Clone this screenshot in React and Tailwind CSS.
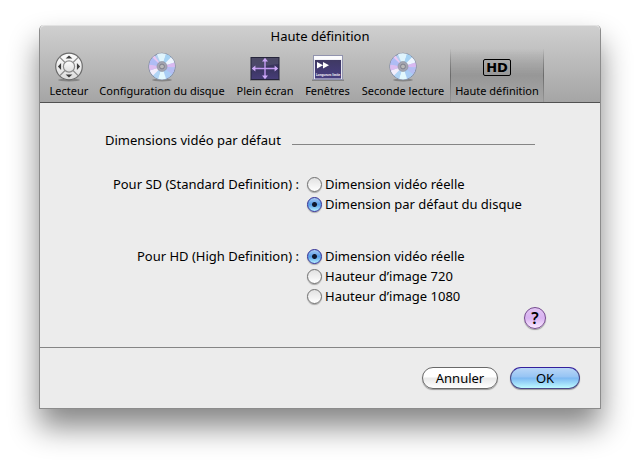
import React, { useState } from "react";

function RemoteIcon() {
  return (
    <svg width="30" height="30" viewBox="0 0 30 30">
      <defs>
        <linearGradient id="remoteFill" x1="0" y1="0" x2="0" y2="1">
          <stop offset="0" stopColor="#fdfdfd" />
          <stop offset="1" stopColor="#dcdcdc" />
        </linearGradient>
      </defs>
      <ellipse cx="15" cy="28" rx="11" ry="1.5" fill="#000" opacity="0.25" />
      <circle cx="15" cy="14.5" r="13.3" fill="url(#remoteFill)" stroke="#6c6c6c" strokeWidth="1.2" />
      <path d="M6 5.5l5 5M24 5.5l-5 5M6 23.5l5-5M24 23.5l-5-5" stroke="#8f8f8f" strokeWidth="1.1" />
      <circle cx="15" cy="14.5" r="5.6" fill="url(#remoteFill)" stroke="#8f8f8f" strokeWidth="1.2" />
      <path
        d="M15 3.4l3.4 3.2h-6.8zM15 25.6l3.4-3.2h-6.8zM3.9 14.5l3.2-3.4v6.8zM26.1 14.5l-3.2-3.4v6.8z"
        fill="#3d3d3d"
      />
    </svg>
  );
}

function DiscIcon() {
  return (
    <svg width="30" height="30" viewBox="0 0 30 30">
      <ellipse cx="15" cy="28" rx="10" ry="1.4" fill="#000" opacity="0.25" />
      <g transform="translate(0 -0.5)">
        <circle cx="15" cy="15" r="13.3" fill="#b3cdf0" stroke="#858b9e" strokeWidth="1" />
        <path d="M15 15L10 2.8A13 13 0 0 1 19 2.6z" fill="#dff4fc" />
        <path d="M15 15L19 2.6A13 13 0 0 1 24 5.8z" fill="#a5d2f3" />
        <path d="M15 15L24 5.8A13 13 0 0 1 27.4 11z" fill="#eef6ff" />
        <path d="M15 15L27.4 11A13 13 0 0 1 27.9 16z" fill="#d9b9f0" />
        <path d="M15 15L27.9 16A13 13 0 0 1 25 23z" fill="#b4bdf2" />
        <path d="M15 15L25 23A13 13 0 0 1 19 27.3z" fill="#a9cdf5" />
        <path d="M15 15L19 27.3A13 13 0 0 1 11 27.3z" fill="#e3f8fd" />
        <path d="M15 15L11 27.3A13 13 0 0 1 6 24z" fill="#b1d5f5" />
        <path d="M15 15L6 24A13 13 0 0 1 2.8 19z" fill="#f3eefc" />
        <path d="M15 15L2.8 19A13 13 0 0 1 2.2 13z" fill="#dcbdf0" />
        <path d="M15 15L2.2 13A13 13 0 0 1 5.5 6z" fill="#afbcf5" />
        <path d="M15 15L5.5 6A13 13 0 0 1 7.6 4.3z" fill="#eac8f2" />
        <circle cx="15" cy="15" r="5" fill="#a3a4b0" stroke="#8b8e9c" strokeWidth="0.6" />
        <circle cx="15" cy="15" r="2.4" fill="#b9b9b9" stroke="#727482" strokeWidth="0.8" />
      </g>
    </svg>
  );
}

function FullScreenIcon() {
  return (
    <svg width="30" height="30" viewBox="0 0 30 30">
      <defs>
        <linearGradient id="screenFill" x1="0" y1="0" x2="0" y2="1">
          <stop offset="0" stopColor="#3b3955" />
          <stop offset="0.5" stopColor="#3a3560" />
          <stop offset="1" stopColor="#473d78" />
        </linearGradient>
      </defs>
      <rect x="0" y="27.5" width="30" height="1.5" fill="#000" opacity="0.2" />
      <rect x="1" y="5.5" width="28" height="22" fill="url(#screenFill)" stroke="#25243a" />
      <path d="M1.5 6h27v6Q14 13 1.5 19z" fill="#fff" opacity="0.09" />
      <path d="M3 16.5h24M15 7.5v18" stroke="#c39af2" strokeWidth="1.4" />
      <path
        d="M15 5.8l3 3.6h-6zM15 27.2l3-3.6h-6zM1.8 16.5l3.6-3v6zM28.2 16.5l-3.6-3v6z"
        fill="#cda9f8"
      />
    </svg>
  );
}

function WindowsIcon() {
  return (
    <svg width="32" height="30" viewBox="0 0 32 30">
      <defs>
        <linearGradient id="osdFill" x1="0" y1="0" x2="0" y2="1">
          <stop offset="0" stopColor="#3f3963" />
          <stop offset="1" stopColor="#463d80" />
        </linearGradient>
      </defs>
      <rect x="0" y="27.5" width="32" height="1.5" fill="#000" opacity="0.25" />
      <rect x="1.5" y="3.5" width="29" height="24" fill="#e5e5ef" stroke="#9193ae" />
      <rect x="2" y="4" width="28" height="3.5" fill="#fbfbfd" />
      <rect x="3" y="8" width="26" height="18.5" fill="url(#osdFill)" />
      <path d="M5 10l6 3.2-6 3.3zM11 10l6 3.2-6 3.3z" fill="#fff" />
      <text x="4" y="24" fill="#fff" fontSize="3" fontWeight="700" fontFamily="Liberation Sans, sans-serif">
        Longueurs limite
      </text>
    </svg>
  );
}

function HDIcon() {
  return (
    <span className="flex h-[17px] w-7 items-center justify-center rounded-xs border border-black font-['DejaVu_Sans',sans-serif] text-[13px] font-bold leading-none">
      HD
    </span>
  );
}

const tabs = [
  { name: "Lecteur", icon: <RemoteIcon />, width: "w-12" },
  { name: "Configuration du disque", icon: <DiscIcon />, width: "w-[138px]" },
  { name: "Plein écran", icon: <FullScreenIcon />, width: "w-[68px]" },
  { name: "Fenêtres", icon: <WindowsIcon />, width: "w-[57px]" },
  { name: "Seconde lecture", icon: <DiscIcon />, width: "w-[94px]" },
  { name: "Haute définition", icon: <HDIcon />, width: "w-[94px]" },
];

const groups = [
  {
    id: "sd",
    label: "Pour SD (Standard Definition) :",
    options: ["Dimension vidéo réelle", "Dimension par défaut du disque"],
  },
  {
    id: "hd",
    label: "Pour HD (High Definition) :",
    options: ["Dimension vidéo réelle", "Hauteur d’image 720", "Hauteur d’image 1080"],
  },
];

function Radio({ name, label, checked, onChange }) {
  return (
    <label className="flex h-5 items-center gap-[3px]">
      <input
        type="radio"
        name={name}
        checked={checked}
        onChange={onChange}
        className="size-[15px] shrink-0 appearance-none rounded-full border border-[#707070] bg-linear-to-b from-[#e2e2e2] via-[#f0f0f0] to-white shadow-[0_1px_1px_rgba(0,0,0,0.3)] checked:border-[#2d2b94] checked:bg-[radial-gradient(circle_at_50%_50%,#10182e_0_2px,transparent_3px),linear-gradient(to_bottom,#a9c9f2,#559ce8_50%,#b5f0ff)]"
      />
      <span className="whitespace-nowrap">{label}</span>
    </label>
  );
}

function App() {
  const [activeTab, setActiveTab] = useState("Haute définition");
  const [values, setValues] = useState({ sd: 1, hd: 0 });

  return (
    <div className="min-h-screen bg-white px-[39px] pt-[25px] pb-[54px] font-['Noto_Sans',sans-serif] text-[13px] leading-5 text-black">
      <div className="rounded-t-[5px] border border-t-0 border-[#8c8c8c] shadow-[0_18px_30px_rgba(0,0,0,0.48)]">
        <header className="rounded-t-[5px] border-t border-b border-t-[#e2e2e2] border-b-[#515151] bg-linear-to-b from-[#cfcfcf] to-[#a5a5a5]">
          <h1 className="h-[23px] text-center leading-5">Haute définition</h1>
          <nav className="flex pl-[5px]">
            {tabs.map((tab) => (
              <button
                key={tab.name}
                type="button"
                onClick={() => setActiveTab(tab.name)}
                className={`flex h-[53px] shrink-0 flex-col items-center pt-[2px] text-[11px] leading-4 whitespace-nowrap ${tab.width} ${
                  activeTab === tab.name
                    ? "border-x [border-image:linear-gradient(to_bottom,transparent,#6b6b6b_50%,#999)_1] bg-linear-to-b from-transparent via-[#979797] to-[#a5a5a5]"
                    : ""
                }`}
              >
                <span className="flex h-8 items-center justify-center">{tab.icon}</span>
                <span>{tab.name}</span>
              </button>
            ))}
          </nav>
        </header>

        <main className="bg-[#ececec] px-[65px] pt-[27px] pb-[18px]">
          <div className="flex items-center">
            <h2 className="w-[187px] whitespace-nowrap">Dimensions vidéo par défaut</h2>
            <hr className="mt-2 w-[243px] border-[#858585]" />
          </div>

          <div className="mt-6 flex flex-col gap-8">
            {groups.map((group) => (
              <div key={group.id} role="radiogroup" aria-labelledby={group.id} className="flex gap-2">
                <span id={group.id} className="w-[194px] text-right whitespace-nowrap">
                  {group.label}
                </span>
                <div>
                  {group.options.map((option, i) => (
                    <Radio
                      key={option}
                      name={group.id}
                      label={option}
                      checked={values[group.id] === i}
                      onChange={() => setValues({ ...values, [group.id]: i })}
                    />
                  ))}
                </div>
              </div>
            ))}
          </div>

          <div className="-mr-[11px] flex justify-end pt-px">
            <button
              type="button"
              aria-label="Aide"
              className="flex size-[22px] items-center justify-center rounded-full border border-[#774b91] bg-linear-to-b from-[#e0c4f2] via-[#d9b3f1] to-[#fbeaff] text-base font-semibold shadow-[0_1px_1px_rgba(0,0,0,0.35)]"
            >
              ?
            </button>
          </div>
        </main>

        <footer className="flex justify-end gap-3 border-t border-[#858585] bg-[#ececec] px-5 py-[19px]">
          <button
            type="button"
            className="h-[22px] w-[76px] rounded-full border border-[#696969] bg-linear-to-b from-white from-45% via-[#e9e9e9] via-50% to-white leading-5 shadow-[0_1px_1px_rgba(0,0,0,0.35)]"
          >
            Annuler
          </button>
          <button
            type="button"
            className="h-[22px] w-[70px] rounded-full border border-[#4b4a86] border-t-[#34209c] bg-[linear-gradient(to_bottom,#b9d6f7,#96c4f4_45%,#7db8f2_50%,#bdfaff)] leading-5 shadow-[0_1px_1px_rgba(0,0,0,0.35)]"
          >
            OK
          </button>
        </footer>
      </div>
    </div>
  );
}

export default App;
